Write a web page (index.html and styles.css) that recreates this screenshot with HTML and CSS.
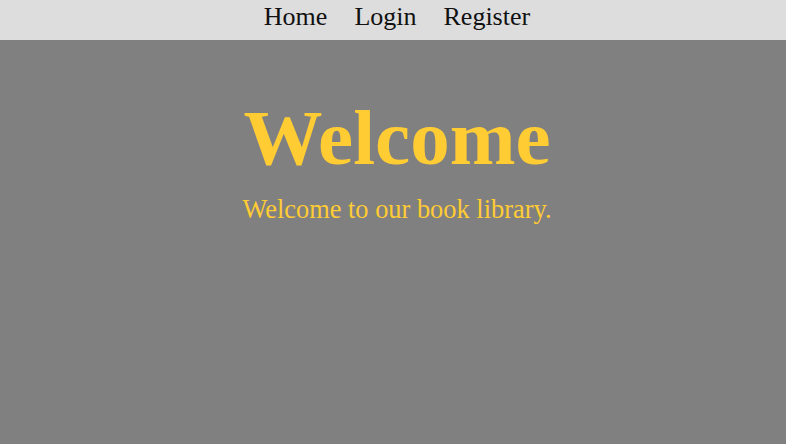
FILE: index.html
```html
<!DOCTYPE html>
<html>
<head>
<meta charset="utf-8">
<link rel="stylesheet" href="styles.css">
</head>
<body>
<nav class="nav">
  <a class="nav-link" href="#">Home</a>
  <a class="nav-link" href="#">Login</a>
  <a class="nav-link" href="#">Register</a>
</nav>
<main class="hero">
  <h1 class="hero-title">Welcome</h1>
  <p class="hero-text">Welcome to our book library.</p>
</main>
</body>
</html>
```
FILE: styles.css
```css
html, body {
  margin: 0;
  padding: 0;
}
body {
  background: #808080;
  font-family: "Liberation Serif", "Times New Roman", serif;
  min-height: 444px;
}
.nav {
  background: #dddddd;
  height: 40px;
  box-sizing: border-box;
  display: flex;
  justify-content: center;
  align-items: flex-start;
  gap: 27px;
  padding: 2px 0 0 8px;
}
.nav-link {
  color: #111;
  text-decoration: none;
  font-size: 26px;
  line-height: normal;
}
.hero {
  text-align: center;
  color: #ffcc33;
  padding-left: 8px;
}
.hero-title {
  font-size: 79px;
  font-weight: bold;
  margin: 53px 0 0;
  line-height: 90px;
}
.hero-text {
  font-size: 26.4px;
  line-height: 30px;
  margin: 11px 0 0;
}
```
